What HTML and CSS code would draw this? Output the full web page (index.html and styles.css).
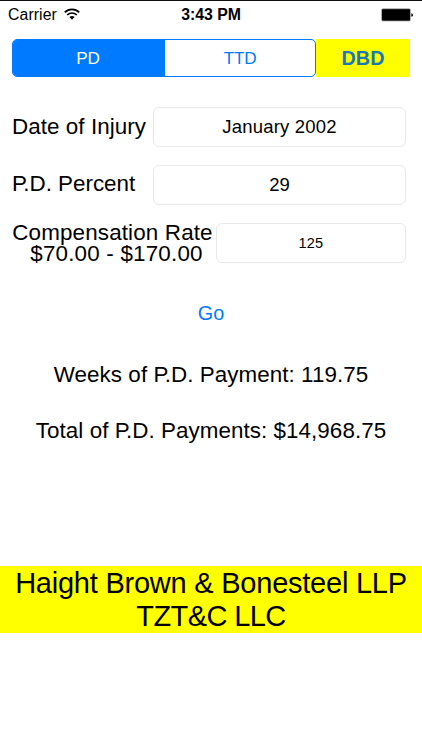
FILE: index.html
```
<!DOCTYPE html>
<html lang="en">
<head>
<meta charset="utf-8">
<meta name="viewport" content="width=device-width">
<title>PD Calculator</title>
<link rel="stylesheet" href="styles.css">
</head>
<body>
<header class="status">
  <div class="carrier"><span class="carrier-name">Carrier</span>
    <svg class="wifi" width="16" height="12" viewBox="0 0 16 12" fill="none" stroke="#000" stroke-width="1.7"><path d="M.8 4.3a10.4 10.4 0 0 1 14.4 0M3.2 7a6.8 6.8 0 0 1 9.6 0"/><path d="M5.4 9.1a3.8 3.8 0 0 1 5.2 0L8 11.8z" fill="#000" stroke="none"/></svg>
  </div>
  <span class="time">3:43 PM</span>
  <svg class="battery" width="33" height="14" viewBox="0 0 33 14"><rect x=".4" y=".6" width="29.2" height="12.6" rx="1.5" fill="#777"/><rect x="1" y="1.2" width="28" height="11.4" rx=".8"/><path d="M30.3 5.2q1.8.4 1.8 1.8t-1.8 1.8z"/></svg>
</header>
<nav class="tabs">
  <div class="segments"><button class="segment selected">PD</button><button class="segment">TTD</button></div>
  <button class="dbd">DBD</button>
</nav>
<main>
  <div class="row"><label class="label l-date">Date of Injury</label><div class="field v-date">January 2002</div></div>
  <div class="row"><label class="label l-percent"><span class="kern">P</span>.D. Percent</label><div class="field">29</div></div>
  <div class="row"><label class="label rate"><span class="l-rate">Compensation Rate</span><span class="l-range">$70.00 - $170.00</span></label><div class="field small">125</div></div>
  <button class="go">Go</button>
  <p class="result weeks">Weeks of <span class="kern">P</span>.D. Payment: 119.75</p>
  <p class="result total">Total of <span class="kern">P</span>.D. Payments: $14,968.75</p>
</main>
<footer class="firm"><span class="firm-a">Haight Brown &amp; Bonesteel LLP</span><span class="firm-b">TZT&amp;C LLC</span></footer>
</body>
</html>
```
FILE: styles.css
```
* { box-sizing: border-box; }
body {
  margin: 0;
  height: 750px;
  overflow: hidden;
  background: #fff;
  border-top: 1px solid #111;
  color: #000;
  font: 22.4px/26px "Liberation Sans", Arial, sans-serif;
}
span { white-space: nowrap; }
button { border: 0; padding: 0; background: none; font-family: inherit; color: #007aff; }
.kern { letter-spacing: -3.6px; }
.status {
  display: grid;
  grid-template-columns: 1fr auto 1fr;
  align-items: center;
  height: 28px;
  padding: 0 8px;
  font-size: 15.8px;
  line-height: 28px;
}
.carrier { display: flex; align-items: center; gap: 7px; }
.carrier-name { letter-spacing: .1px; }
.wifi { margin-top: -2px; }
.time { font-weight: bold; }
.battery { justify-self: end; }
.tabs { display: flex; height: 38px; margin: 10px 12px 0; }
.segments {
  display: flex;
  width: 304px;
  border: 1px solid #007aff;
  border-radius: 5px;
  overflow: hidden;
}
.segment { flex: 1; padding: 1px 2px 0 0; font-size: 17.1px; letter-spacing: -.2px; }
.selected { background: #007aff; color: #fff; }
.segment + .segment { padding: 1px 0 0; }
.dbd { flex: 1; background: #ff0; color: #1b78b8; font-size: 19.8px; font-weight: bold; }
main { padding: 30px 16px 0 12px; }
.row { display: flex; height: 40px; margin-bottom: 18px; }
.label { width: 141px; padding-top: 7px; white-space: nowrap; }
.l-date { letter-spacing: .06px; }
.l-percent { padding-top: 6px; letter-spacing: -.02px; }
.rate {
  display: flex;
  flex-direction: column;
  align-items: center;
  width: 204px;
  padding: 0 3px 0 0;
  line-height: 21px;
}
.l-rate { margin-top: -1px; letter-spacing: .15px; }
.l-range { padding-left: 8px; letter-spacing: .2px; }
.field {
  flex: 1;
  border: 1px solid #e8e8e8;
  border-radius: 6px;
  text-align: center;
  font-size: 18.5px;
  line-height: 38px;
}
.v-date { letter-spacing: .2px; }
.small { font-size: 14.5px; letter-spacing: .2px; }
.go {
  display: block;
  width: 80px;
  height: 40px;
  margin: 30px auto 0;
  padding-left: 4px;
  font-size: 19.8px;
}
.result { margin: 30px -4px 0 0; text-align: center; }
.go + .result { margin-top: 29px; }
.weeks { letter-spacing: .05px; }
.total { letter-spacing: .05px; }
.firm {
  display: flex;
  flex-direction: column;
  align-items: center;
  height: 67px;
  margin-top: 122px;
  padding-top: 1px;
  background: #ff0;
  font-size: 29px;
  line-height: 33px;
}
.firm-a { letter-spacing: -.23px; }
.firm-b { letter-spacing: -.6px; }
```
